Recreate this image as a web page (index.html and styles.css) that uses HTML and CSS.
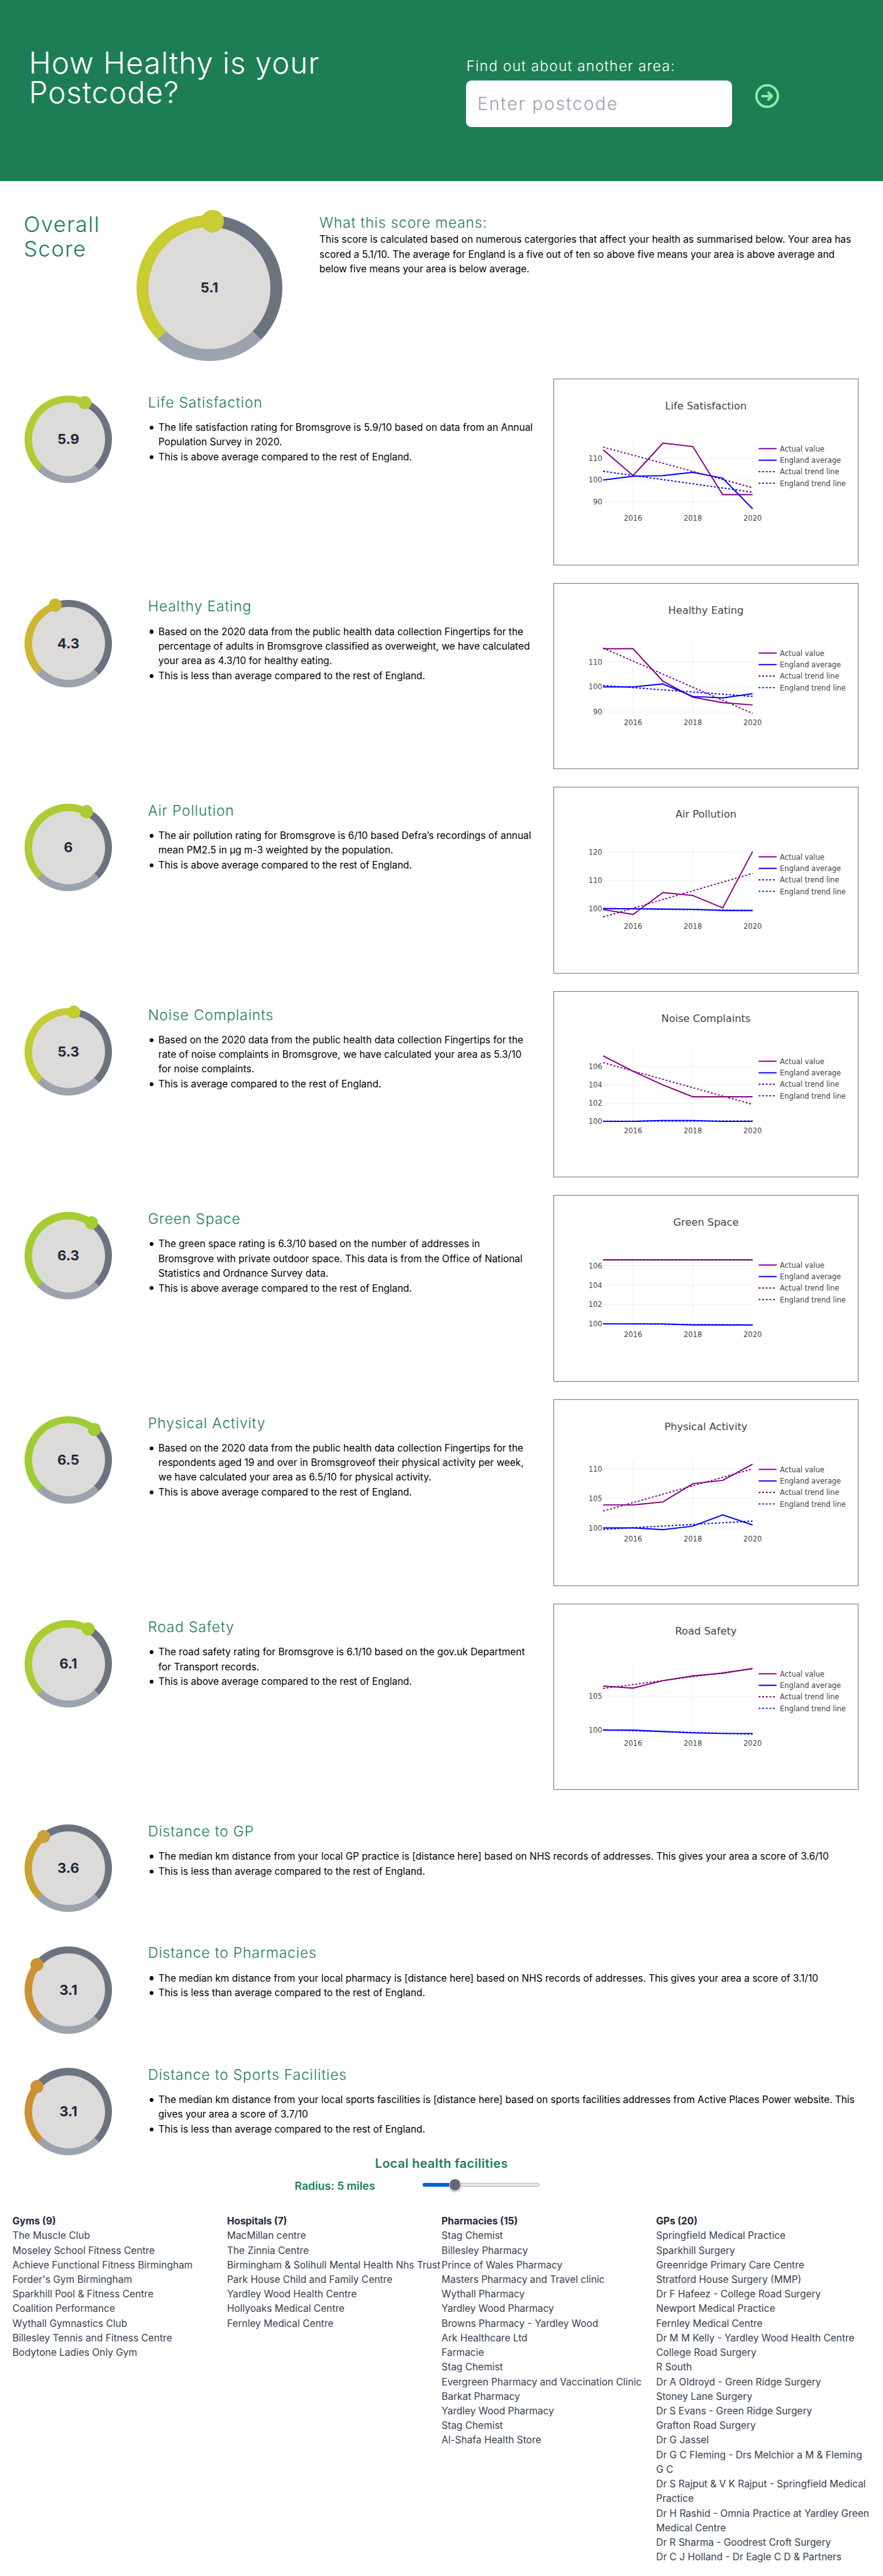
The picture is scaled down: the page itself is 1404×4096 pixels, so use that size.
FILE: index.html
```html
<!DOCTYPE html>
<html lang="en">
<head>
<meta charset="utf-8">
<title>How Healthy is your Postcode?</title>
<link rel="stylesheet" href="styles.css">
</head>
<body>
<header class="hero">
  <h1 class="hero-title">How Healthy is your<br>Postcode?</h1>
  <form class="search">
    <label class="search-label" for="postcode">Find out about another area:</label>
    <div class="search-row">
      <input class="search-input" id="postcode" type="text" placeholder="Enter postcode">
      <svg class="search-icon" viewBox="0 0 24 24" fill="none" stroke="currentColor" stroke-width="2" stroke-linecap="round" stroke-linejoin="round"><path d="M13 9l3 3m0 0l-3 3m3-3H8m13 0a9 9 0 11-18 0 9 9 0 0118 0z"/></svg>
    </div>
  </form>
</header>

<main>
  <section class="overall">
    <h2 class="overall-title">Overall<br>Score</h2>
    <div class="gauge gauge-large" style="--score:5.1"><span class="gauge-value">5.1</span></div>
    <div class="overall-text">
      <h3 class="heading">What this score means:</h3>
      <p class="copy">This score is calculated based on numerous catergories that affect your health as summarised below. Your area has<br>scored a 5.1/10. The average for England is a five out of ten so above five means your area is above average and<br>below five means your area is below average.</p>
    </div>
  </section>

  <section class="metric">
    <div class="gauge" style="--score:5.9"><span class="gauge-value">5.9</span></div>
    <div class="metric-text">
      <h3 class="heading">Life Satisfaction</h3>
      <ul class="points">
        <li>The life satisfaction rating for Bromsgrove is 5.9/10 based on data from an Annual<br>Population Survey in 2020.</li>
        <li>This is above average compared to the rest of England.</li>
      </ul>
    </div>
    <div class="chart" data-chart="life"></div>
  </section>

  <section class="metric">
    <div class="gauge" style="--score:4.3"><span class="gauge-value">4.3</span></div>
    <div class="metric-text">
      <h3 class="heading">Healthy Eating</h3>
      <ul class="points">
        <li>Based on the 2020 data from the public health data collection Fingertips for the<br>percentage of adults in Bromsgrove classified as overweight, we have calculated<br>your area as 4.3/10 for healthy eating.</li>
        <li>This is less than average compared to the rest of England.</li>
      </ul>
    </div>
    <div class="chart" data-chart="eating"></div>
  </section>

  <section class="metric">
    <div class="gauge" style="--score:6"><span class="gauge-value">6</span></div>
    <div class="metric-text">
      <h3 class="heading">Air Pollution</h3>
      <ul class="points">
        <li>The air pollution rating for Bromsgrove is 6/10 based Defra’s recordings of annual<br>mean PM2.5 in µg m-3 weighted by the population.</li>
        <li>This is above average compared to the rest of England.</li>
      </ul>
    </div>
    <div class="chart" data-chart="air"></div>
  </section>

  <section class="metric">
    <div class="gauge" style="--score:5.3"><span class="gauge-value">5.3</span></div>
    <div class="metric-text">
      <h3 class="heading">Noise Complaints</h3>
      <ul class="points">
        <li>Based on the 2020 data from the public health data collection Fingertips for the<br>rate of noise complaints in Bromsgrove, we have calculated your area as 5.3/10<br>for noise complaints.</li>
        <li>This is average compared to the rest of England.</li>
      </ul>
    </div>
    <div class="chart" data-chart="noise"></div>
  </section>

  <section class="metric">
    <div class="gauge" style="--score:6.3"><span class="gauge-value">6.3</span></div>
    <div class="metric-text">
      <h3 class="heading">Green Space</h3>
      <ul class="points">
        <li>The green space rating is 6.3/10 based on the number of addresses in<br>Bromsgrove with private outdoor space. This data is from the Office of National<br>Statistics and Ordnance Survey data.</li>
        <li>This is above average compared to the rest of England.</li>
      </ul>
    </div>
    <div class="chart" data-chart="green"></div>
  </section>

  <section class="metric">
    <div class="gauge" style="--score:6.5"><span class="gauge-value">6.5</span></div>
    <div class="metric-text">
      <h3 class="heading">Physical Activity</h3>
      <ul class="points">
        <li>Based on the 2020 data from the public health data collection Fingertips for the<br>respondents aged 19 and over in Bromsgroveof their physical activity per week,<br>we have calculated your area as 6.5/10 for physical activity.</li>
        <li>This is above average compared to the rest of England.</li>
      </ul>
    </div>
    <div class="chart" data-chart="activity"></div>
  </section>

  <section class="metric">
    <div class="gauge" style="--score:6.1"><span class="gauge-value">6.1</span></div>
    <div class="metric-text">
      <h3 class="heading">Road Safety</h3>
      <ul class="points">
        <li>The road safety rating for Bromsgrove is 6.1/10 based on the gov.uk Department<br>for Transport records.</li>
        <li>This is above average compared to the rest of England.</li>
      </ul>
    </div>
    <div class="chart" data-chart="road"></div>
  </section>

  <section class="metric metric-short">
    <div class="gauge" style="--score:3.6"><span class="gauge-value">3.6</span></div>
    <div class="metric-text">
      <h3 class="heading">Distance to GP</h3>
      <ul class="points">
        <li>The median km distance from your local GP practice is [distance here] based on NHS records of addresses. This gives your area a score of 3.6/10</li>
        <li>This is less than average compared to the rest of England.</li>
      </ul>
    </div>
  </section>

  <section class="metric metric-short">
    <div class="gauge" style="--score:3.1"><span class="gauge-value">3.1</span></div>
    <div class="metric-text">
      <h3 class="heading">Distance to Pharmacies</h3>
      <ul class="points">
        <li>The median km distance from your local pharmacy is [distance here] based on NHS records of addresses. This gives your area a score of 3.1/10</li>
        <li>This is less than average compared to the rest of England.</li>
      </ul>
    </div>
  </section>

  <section class="metric metric-last">
    <div class="gauge" style="--score:3.1"><span class="gauge-value">3.1</span></div>
    <div class="metric-text">
      <h3 class="heading">Distance to Sports Facilities</h3>
      <ul class="points">
        <li>The median km distance from your local sports fascilities is [distance here] based on sports facilities addresses from Active Places Power website. This<br>gives your area a score of 3.7/10</li>
        <li>This is less than average compared to the rest of England.</li>
      </ul>
    </div>
  </section>

  <section class="facilities">
    <h3 class="facilities-title"><span>Local health facilities</span></h3>
    <div class="radius">
      <span class="radius-label">Radius: 5 miles</span>
      <div class="slider"><div class="slider-fill"></div><div class="slider-thumb"></div></div>
    </div>
    <div class="columns">
      <div class="column">
        <h4>Gyms (9)</h4>
        <p>The Muscle Club</p>
        <p>Moseley School Fitness Centre</p>
        <p>Achieve Functional Fitness Birmingham</p>
        <p>Forder's Gym Birmingham</p>
        <p>Sparkhill Pool &amp; Fitness Centre</p>
        <p>Coalition Performance</p>
        <p>Wythall Gymnastics Club</p>
        <p>Billesley Tennis and Fitness Centre</p>
        <p>Bodytone Ladies Only Gym</p>
      </div>
      <div class="column">
        <h4>Hospitals (7)</h4>
        <p>MacMillan centre</p>
        <p>The Zinnia Centre</p>
        <p>Birmingham &amp; Solihull Mental Health Nhs Trust</p>
        <p>Park House Child and Family Centre</p>
        <p>Yardley Wood Health Centre</p>
        <p>Hollyoaks Medical Centre</p>
        <p>Fernley Medical Centre</p>
      </div>
      <div class="column">
        <h4>Pharmacies (15)</h4>
        <p>Stag Chemist</p>
        <p>Billesley Pharmacy</p>
        <p>Prince of Wales Pharmacy</p>
        <p>Masters Pharmacy and Travel clinic</p>
        <p>Wythall Pharmacy</p>
        <p>Yardley Wood Pharmacy</p>
        <p>Browns Pharmacy - Yardley Wood</p>
        <p>Ark Healthcare Ltd</p>
        <p>Farmacie</p>
        <p>Stag Chemist</p>
        <p>Evergreen Pharmacy and Vaccination Clinic</p>
        <p>Barkat Pharmacy</p>
        <p>Yardley Wood Pharmacy</p>
        <p>Stag Chemist</p>
        <p>Al-Shafa Health Store</p>
      </div>
      <div class="column">
        <h4>GPs (20)</h4>
        <p>Springfield Medical Practice</p>
        <p>Sparkhill Surgery</p>
        <p>Greenridge Primary Care Centre</p>
        <p>Stratford House Surgery (MMP)</p>
        <p>Dr F Hafeez - College Road Surgery</p>
        <p>Newport Medical Practice</p>
        <p>Fernley Medical Centre</p>
        <p>Dr M M Kelly - Yardley Wood Health Centre</p>
        <p>College Road Surgery</p>
        <p>R South</p>
        <p>Dr A Oldroyd - Green Ridge Surgery</p>
        <p>Stoney Lane Surgery</p>
        <p>Dr S Evans - Green Ridge Surgery</p>
        <p>Grafton Road Surgery</p>
        <p>Dr G Jassel</p>
        <p>Dr G C Fleming - Drs Melchior a M &amp; Fleming<br>G C</p>
        <p>Dr S Rajput &amp; V K Rajput - Springfield Medical<br>Practice</p>
        <p>Dr H Rashid - Omnia Practice at Yardley Green<br>Medical Centre</p>
        <p>Dr R Sharma - Goodrest Croft Surgery</p>
        <p>Dr C J Holland - Dr Eagle C D &amp; Partners</p>
      </div>
    </div>
  </section>
</main>
<script src="charts.js"></script>
</body>
</html>
```
FILE: styles.css
```css
*, *::before, *::after { box-sizing: border-box; margin: 0; padding: 0; }

html { font-size: 17.55px; }

body {
  font-family: Inter, "Liberation Sans", sans-serif;
  font-size: 0.8825rem;
  line-height: 1.5;
  color: #000;
  background: #fff;
  overflow: hidden;
}

/* Header */
.hero {
  display: flex;
  height: 16.4rem;
  background: #1d7e55;
  color: #fff;
}
.hero-title {
  width: 42.25rem;
  padding: 4.37rem 0 0 2.62rem;
  font-size: 2.7rem;
  line-height: 2.67rem;
  font-weight: 300;
  letter-spacing: 0.021em;
}
.search { padding-top: 5.11rem; }
.search-label {
  display: block;
  font-size: 1.3rem;
  line-height: 1.75rem;
  font-weight: 300;
  letter-spacing: 0.052em;
  margin-bottom: 0.44rem;
}
.search-row { display: flex; align-items: flex-start; }
.search-input {
  width: 24.06rem;
  height: 4.22rem;
  padding: 0 1rem;
  border: 0;
  border-radius: 0.5rem;
  background: #fff;
  font: 300 1.6rem Inter, sans-serif;
  letter-spacing: 0.069em;
}
.search-input::placeholder { color: #9ca3af; opacity: 1; }
.search-icon {
  width: 2.6rem;
  height: 2.6rem;
  margin: 0.08rem 0 0 1.88rem;
  color: #86efac;
}

/* Gauges */
.gauge {
  --size: 7.92rem;
  --hue: calc(var(--score) * 12);
  position: relative;
  flex: none;
  display: flex;
  align-items: center;
  justify-content: center;
  width: var(--size);
  height: var(--size);
  border-radius: 50%;
  background: conic-gradient(from 225deg, hsl(var(--hue) 60% 50%) calc(var(--score) * 27deg), #6b7280 0 270deg, #9ca3af 0);
}
.gauge-large { --size: 13.23rem; }
.gauge::before {
  content: "";
  position: absolute;
  inset: 8.2%;
  border-radius: 50%;
  background: #dddbd9;
}
.gauge::after {
  content: "";
  position: absolute;
  left: 50%;
  top: 50%;
  width: 15.4%;
  height: 15.4%;
  margin: -7.7%;
  border-radius: 50%;
  background: hsl(var(--hue) 60% 50%);
  transform: rotate(calc(var(--score) * 27deg - 135deg)) translateY(calc(var(--size) * -0.4585));
}
.gauge-value {
  position: relative;
  font-size: 1.25rem;
  font-weight: 700;
  color: #1f2937;
}

/* Overall score */
.overall {
  display: flex;
  height: 17.91rem;
  padding: 3.06rem 0 0 2.15rem;
}
.overall-title {
  width: 10.2rem;
  margin-top: -0.19rem;
  font-size: 1.95rem;
  line-height: 2.22rem;
  font-weight: 300;
  letter-spacing: 0.043em;
  color: #1d7e55;
}
.overall-text { margin-top: -0.165rem; padding-left: 3.36rem; }
.heading {
  font-size: 1.3rem;
  line-height: 1.75rem;
  font-weight: 300;
  letter-spacing: 0.038em;
  color: #1d7e55;
}
.copy { white-space: nowrap; }

/* Score rows */
.metric {
  display: flex;
  height: 18.495rem;
  padding-left: 2.23rem;
}
.metric > .gauge { margin-top: 1.53rem; }
.metric-text {
  flex: none;
  width: 37.66rem;
  padding: 1.295rem 0 0 3.25rem;
}
.metric-short { height: 11.03rem; }
.metric-last { height: 9.32rem; }
.metric-short .metric-text, .metric-last .metric-text { width: auto; }
.points {
  margin-top: 0.71rem;
  padding-left: 0.95rem;
  list-style: none;
  white-space: nowrap;
}
.points li { position: relative; }
.points li + li { margin-top: 0.03rem; }
.points li::before {
  content: "";
  position: absolute;
  left: -0.8rem;
  top: 0.5rem;
  width: 0.35rem;
  height: 0.35rem;
  border-radius: 50%;
  background: #000;
}

/* Charts */
.chart {
  flex: none;
  width: 27.63rem;
  height: 16.9rem;
  margin-left: 2.35rem;
  border: 1px solid #747474;
}
.chart svg { display: block; width: 100%; height: 100%; }
.chart text { font-family: "DejaVu Sans", sans-serif; font-size: 10.5px; fill: #444; }
.chart .chart-title { font-size: 14.9px; text-anchor: middle; }
.chart .tick-x { text-anchor: middle; }
.chart .tick-y { text-anchor: end; }
.chart .grid { stroke: #eee; stroke-width: 0.9; }
.chart .line { fill: none; stroke-width: 1.75; }
.chart .actual { stroke: #800080; }
.chart .england { stroke: #00f; }
.chart .trend { stroke-dasharray: 2.63 2.63; }

/* Local facilities */
.facilities-title {
  text-align: center;
  font-size: 1.125rem;
  line-height: 1.75rem;
  font-weight: 600;
  letter-spacing: 0.022em;
  color: #1d7e55;
}
.radius {
  display: flex;
  align-items: center;
  height: 1.5rem;
  margin-top: 0.45rem;
  padding-left: 26.7rem;
}
.radius-label {
  width: 11.6rem;
  font-size: 1rem;
  font-weight: 600;
  color: #1d7e55;
}
.slider {
  position: relative;
  width: 10.6rem;
  height: 0.36rem;
  margin-bottom: 0.3rem;
  border: 1px solid #b4b4bc;
  border-radius: 0.2rem;
  background: #e9e9ed;
}
.slider-fill {
  position: absolute;
  left: -1px;
  top: -1px;
  bottom: -1px;
  width: 2.9rem;
  border-radius: 0.2rem;
  background: #0060df;
}
.slider-thumb {
  position: absolute;
  left: 2.32rem;
  top: -0.425rem;
  width: 1.09rem;
  height: 1.09rem;
  border: 1.5px solid #fff;
  border-radius: 50%;
  background: #676774;
  box-shadow: 0 1px 3px rgba(0, 0, 0, 0.4);
}
.columns {
  display: grid;
  grid-template-columns: repeat(4, 19.44rem);
  padding: 1.73rem 0 0 1.125rem;
  white-space: nowrap;
}
.column { color: #374151; }
.column h4 { font-size: 0.8825rem; font-weight: 700; color: #1f2937; }
```
FILE: charts.js
```js
// Values are indexed against the 2015 England average; trends are [start, end].
const charts = {
  life: { title: "Life Satisfaction", range: [85.1, 118.5], ticks: [90, 100, 110],
    actual: [113.8, 102, 116.9, 115.3, 93.3, 93.3], england: [100, 101.7, 102, 103.5, 100.8, 86.8],
    actualTrend: [115.1, 96.5], englandTrend: [104, 94.4] },
  eating: { title: "Healthy Eating", range: [88, 117.2], ticks: [90, 100, 110],
    actual: [115.3, 115.3, 102.3, 95.9, 93.7, 92.8], england: [100, 100, 101.2, 96.2, 95.6, 97.3],
    actualTrend: [115.6, 89.4], englandTrend: [100.6, 96.2] },
  air: { title: "Air Pollution", range: [95.8, 121.55], ticks: [100, 110, 120],
    actual: [99.7, 98, 105.7, 104.7, 100.3, 120.2], england: [100.05, 100, 99.9, 99.8, 99.4, 99.4],
    actualTrend: [97.1, 112.5], englandTrend: [100.1, 99.4] },
  noise: { title: "Noise Complaints", range: [99.6, 107.6], ticks: [100, 102, 104, 106],
    actual: [107.2, 105.5, 104, 102.7, 102.7, 102.7], england: [100, 100, 100.1, 100.1, 100, 100],
    actualTrend: [106.45, 101.87], englandTrend: [100.03, 100.05] },
  green: { title: "Green Space", range: [99.5, 107], ticks: [100, 102, 104, 106],
    actual: [106.6, 106.6, 106.6, 106.6, 106.6, 106.6], england: [100, 100, 100, 99.9, 99.9, 99.9],
    actualTrend: [106.6, 106.6], englandTrend: [100.03, 99.88] },
  activity: { title: "Physical Activity", range: [99.1, 111.45], ticks: [100, 105, 110],
    actual: [103.9, 103.9, 104.4, 107.5, 108.05, 110.8], england: [100, 100, 99.7, 100.3, 102.2, 100.5],
    actualTrend: [102.85, 110], englandTrend: [99.75, 101.15] },
  road: { title: "Road Safety", range: [98.9, 109.65], ticks: [100, 105],
    actual: [106.5, 106.2, 107.3, 108, 108.4, 109.1], england: [100, 100, 99.8, 99.6, 99.5, 99.5],
    actualTrend: [106.15, 109.05], englandTrend: [100.05, 99.4] }
};

const plot = { left: 71.25, right: 289, top: 88, bottom: 194.2 };
const legend = [
  ["Actual value", "actual"],
  ["England average", "england"],
  ["Actual trend line", "actual trend"],
  ["England trend line", "england trend"]
];

function draw(c) {
  const [lo, hi] = c.range;
  const y = v => plot.bottom - (v - lo) / (hi - lo) * (plot.bottom - plot.top);
  const x = (i, n) => plot.left + i / (n - 1) * (plot.right - plot.left);
  const line = (vals, cls) =>
    `<polyline class="line ${cls}" points="${vals.map((v, i) => x(i, vals.length).toFixed(2) + "," + y(v).toFixed(2)).join(" ")}"/>`;
  let s = `<svg viewBox="0 0 442 270"><text class="chart-title" x="221" y="44">${c.title}</text>`;
  for (const i of [1, 3]) s += `<path class="grid" d="M${x(i, 6)} ${plot.top}V${plot.bottom}"/>`;
  for (const t of c.ticks) {
    s += `<path class="grid" d="M${plot.left} ${y(t)}H${plot.right}"/><text class="tick-y" x="69.8" y="${y(t) + 3.8}">${t}</text>`;
  }
  [1, 3, 5].forEach(i => { s += `<text class="tick-x" x="${x(i, 6)}" y="206">${2015 + i}</text>`; });
  s += line(c.actual, "actual") + line(c.england, "england");
  s += line(c.actualTrend, "actual trend") + line(c.englandTrend, "england trend");
  legend.forEach(([label, cls], i) => {
    const ly = 101.2 + i * 16.8;
    s += `<path class="line ${cls}" d="M297.8 ${ly}h26.2"/><text x="328.8" y="${ly + 3.8}">${label}</text>`;
  });
  return s + "</svg>";
}

document.querySelectorAll("[data-chart]").forEach(el => { el.innerHTML = draw(charts[el.dataset.chart]); });
```
